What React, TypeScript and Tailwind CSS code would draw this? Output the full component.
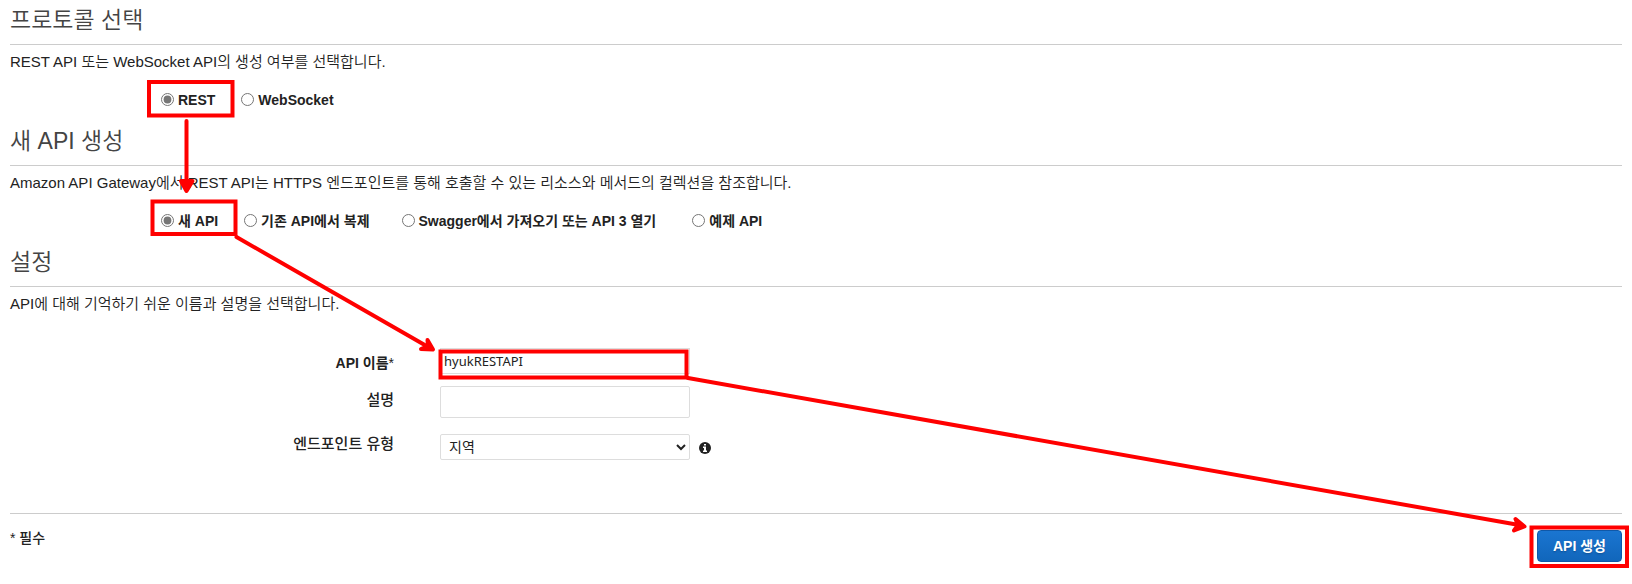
import type { ReactNode } from 'react';


const protocols = [
  { id: 'rest', title: 'REST', checked: true, gap: 'mr-[26px]' },
  { id: 'websocket', title: 'WebSocket', checked: false, gap: '' },
];

const sources = [
  { id: 'new', title: '새 API', checked: true, gap: 'mr-[26px]' },
  { id: 'clone', title: '기존 API에서 복제', checked: false, gap: 'mr-8' },
  { id: 'swagger', title: 'Swagger에서 가져오기 또는 API 3 열기', checked: false, gap: 'mr-9' },
  { id: 'example', title: '예제 API', checked: false, gap: '' },
];

type Option = { id: string; title: string; checked: boolean; gap: string };

const RadioRow = ({ name, options }: { name: string; options: Option[] }) => {
  return (
    <div className="flex items-center h-5 mt-[18px] ml-[151px] text-sm">
      {options.map((item) => (
        <label key={item.id} className={`flex items-center gap-1 font-bold whitespace-nowrap ${item.gap}`}>
          <input type="radio" name={name} defaultChecked={item.checked} className="w-[13px] h-[13px] mb-[2px] accent-[#767676]" />
          {item.title}
        </label>
      ))}
    </div>
  );
};

const Section = ({ title, body, children }: { title: string; body: string; children: ReactNode }) => {
  return (
    <section className="mb-[18px]">
      <h2 className="h-[38px] leading-[26px] text-[23px] font-[350] text-[#444] border-b border-[#ccc]">{title}</h2>
      <p className="mt-[7px] leading-5 font-[350]">{body}</p>
      {children}
    </section>
  );
};

// red boxes and arrows that walk through the steps
const Guide = () => {
  return (
    <svg className="absolute top-0 left-0 pointer-events-none" width="1632" height="584" fill="none" stroke="#f00" strokeWidth="4" aria-hidden="true">
      <rect x="149" y="82" width="83.500" height="33.500" />
      <path d="M186.500 121V184" strokeLinecap="round" />
      <path d="M181 181h11.500L186.500 191z" fill="#f00" strokeLinejoin="round" />
      <rect x="152.500" y="201.500" width="83" height="32.500" />
      <path d="M236.500 237L430 348" strokeLinecap="round" />
      <path d="M427.500 340L433 349.500L421 349L428 346z" fill="#f00" strokeLinejoin="round" />
      <rect x="440.500" y="351.500" width="246" height="26" />
      <path d="M688 378L1522 525.500" strokeLinecap="round" />
      <path d="M1515.500 519L1524.500 526.500L1514 530.500L1518 525z" fill="#f00" strokeLinejoin="round" />
      <rect x="1531.500" y="527.500" width="95.500" height="38.500" />
    </svg>
  );
};

const App = () => {
  return (
    <main className="relative px-[10px] pt-[7px] pb-5 bg-white text-[15px] text-[#222] font-['Liberation_Sans','Noto_Sans_CJK_KR',sans-serif]">
      <Section title="프로토콜 선택" body="REST API 또는 WebSocket API의 생성 여부를 선택합니다.">
        <RadioRow name="protocol" options={protocols} />
      </Section>

      <Section title="새 API 생성" body="Amazon API Gateway에서 REST API는 HTTPS 엔드포인트를 통해 호출할 수 있는 리소스와 메서드의 컬렉션을 참조합니다.">
        <RadioRow name="source" options={sources} />
      </Section>

      <Section title="설정" body="API에 대해 기억하기 쉬운 이름과 설명을 선택합니다.">
        <div className="grid grid-cols-[384px_250px_auto] gap-x-[46px] mt-[34px] leading-5">
          <label htmlFor="api-name" className="pt-[5px] text-right text-sm font-bold">API 이름<span className="font-normal">*</span></label>
          <input id="api-name" defaultValue="hyukRESTAPI" className="h-[26px] px-[3px] mb-3 border border-[#ddd] text-[13px] font-['Noto_Sans',sans-serif]" />
          <span />
          <label htmlFor="description" className="pt-1 text-right font-medium">설명</label>
          <input id="description" className="h-8 px-2 mb-4 border border-[#ddd] rounded-xs" />
          <span />
          <label htmlFor="endpoint" className="text-right font-medium">엔드포인트 유형</label>
          <select id="endpoint" className="h-[26px] px-1 bg-white border border-[#ddd] rounded-xs text-sm">
            <option>지역</option>
          </select>
          <button type="button" aria-label="엔드포인트 유형" className="-ml-[37px] mt-1 w-3 h-5">
            <svg viewBox="0 0 12 12" className="w-3 h-3">
              <circle cx="6" cy="6" r="6" fill="#222" />
              <path d="M5 2h2v1.500H5zM4 4.500h3V8.500h1V10H4V8.500h1V6H4z" fill="#fff" />
            </svg>
          </button>
        </div>
      </Section>

      <footer className="flex items-start justify-between mt-[53px] pt-4 border-t border-[#ccc]">
        <p className="leading-4 text-sm font-medium">* 필수</p>
        <button type="button" className="h-8 px-[15px] rounded-sm border border-[#0f58a8] bg-linear-to-b from-[#1a75d1] to-[#1166bb] text-white text-sm font-bold text-shadow-sm">API 생성</button>
      </footer>

      <Guide />
    </main>
  );
};

export default App;
